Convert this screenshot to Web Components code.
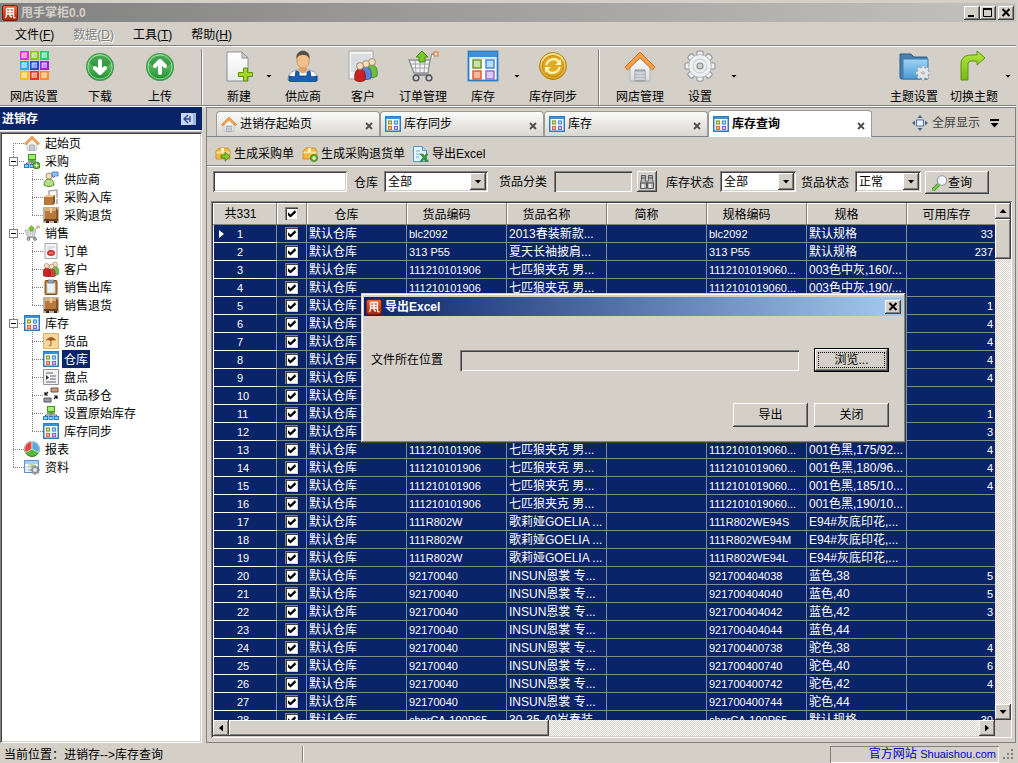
<!DOCTYPE html>
<html lang="zh-CN">
<head>
<meta charset="utf-8">
<title>甩手掌柜0.0</title>
<style>
html, body { height: 100%; margin: 0; }
body { background: #d4d0c8; color: #000; font: 12px/16px "Liberation Sans", "Noto Sans CJK SC", sans-serif; overflow: hidden; }
</style>
</head>
<body>
<app-window></app-window>
<script>
const BASE = `
*, *::before, *::after { box-sizing: border-box; }
:host { display: block; box-sizing: border-box; }
:host([hidden]) { display: none; }
button, input, select { font: inherit; color: inherit; margin: 0; padding: 0; border: 0; border-radius: 0; background: none; }
button { white-space: nowrap; }
.raised { background: #d4d0c8; box-shadow: inset -1px -1px #404040, inset 1px 1px #fff, inset -2px -2px #808080; }
.sunken { box-shadow: inset 1px 1px #808080, inset -1px -1px #fff, inset 2px 2px #404040, inset -2px -2px #d4d0c8; }
`;

function define(name, css, html, setup) {
  customElements.define(name, class extends HTMLElement {
    constructor() {
      super();
      this.attachShadow({ mode: 'open' });
    }
    connectedCallback() {
      if (this.shadowRoot.childNodes.length) return;
      const t = document.createElement('template');
      t.innerHTML = `<style>${BASE}${css}</style>` + (typeof html === 'function' ? html(this) : html);
      this.shadowRoot.append(t.content.cloneNode(true));
      if (setup) setup(this);
    }
  });
}

/* ---------- icons ---------- */
const grad = (id, a, b) => `<linearGradient id="${id}" x1="0" y1="0" x2="0" y2="1"><stop offset="0" stop-color="${a}"/><stop offset="1" stop-color="${b}"/></linearGradient>`;
const tiles = ['#e030d8', '#86c610', '#20cc70', '#30a8f0', '#2848d8', '#a020e0', '#f8b818', '#e83818', '#f89028'];
const person = (x, y, c, d) => `<path d="M${x - 5} ${y + 14}c-1-7 1-11 5-11s6 4 5 11c-3 2-7 2-10 0z" fill="${c}" stroke="${d}" stroke-width=".8"/><circle cx="${x}" cy="${y}" r="3.4" fill="#f6dfc0" stroke="#8f7a5c" stroke-width=".8"/>`;
const arrowBall = p => `<defs>${grad('a', '#8ad88a', '#1c8c2c')}</defs><circle cx="16" cy="17" r="13.4" fill="url(#a)" stroke="#4c9a54" stroke-width="1.2"/><path d="M5 13c3-9 18-12 23-1-4 6-14 9-23 1z" fill="#0e7420" opacity=".45"/><circle cx="16" cy="17" r="12" fill="none" stroke="#a8e8a4" stroke-width=".8"/><path d="${p}" fill="none" stroke="#fff" stroke-width="4" stroke-linejoin="round" stroke-linecap="round"/>`;
const pallet = `<path d="M0 0h16v16H0z" fill="#b9b3a6"/><path d="M2 1h11v11H2z" fill="#b87a3c"/><path d="M2 1h11v3H2z" fill="#dcb07a"/><path d="M7 1h2v5H7z" fill="#ecd2a0"/><path d="M13 1l2 2v9h-2z" fill="#8d5623"/><path d="M1 12h14v2H1z" fill="#6b4020"/><path d="M3 14h3v2H3zM11 14h3v2h-3z" fill="#3c2410"/>`;
const network = (extra = '') => `<path d="M8 6v4M2.500 12v-2h11v2" fill="none" stroke="#557" stroke-width="1"/><rect x="4.500" y="1.500" width="7" height="5" fill="#a5ec6d" stroke="#3f9a1e"/><path d="M4 8h8" stroke="#3f9a1e" stroke-width="1.500"/><g fill="#8fd2f8" stroke="#2a7fc4"><rect x=".5" y="11.500" width="4" height="3"/><rect x="6" y="11.500" width="4" height="3"/><rect x="11.500" y="11.500" width="4" height="3"/></g>${extra}`;
const plusDot = (x, y) => `<circle cx="${x}" cy="${y}" r="3.5" fill="#5cb52a" stroke="#2f7d12" stroke-width=".8"/><path d="M${x - 2} ${y}h4M${x} ${y - 2}v4" stroke="#fff" stroke-width="1.2"/>`;
const gearPath = (cx, cy, r, n, w) => {
  let s = '';
  for (let i = 0; i < n; i++) s += `<rect x="${cx - w / 2}" y="${cy - r}" width="${w}" height="${r}" rx="${w / 4}" transform="rotate(${i * 360 / n} ${cx} ${cy})"/>`;
  return s;
};
const gear = (cx, cy, r) => `<g fill="#eef0f1" stroke="#9a9fa4" stroke-width="${r / 12}">${gearPath(cx, cy, r, 8, r * .42)}</g><circle cx="${cx}" cy="${cy}" r="${r * .76}" fill="#eceeef" stroke="#a4a9ad" stroke-width="${r / 20}"/><circle cx="${cx}" cy="${cy}" r="${r * .46}" fill="none" stroke="#cdd1d4" stroke-width="${r / 12}"/><circle cx="${cx}" cy="${cy}" r="${r * .2}" fill="#d4d0c8" stroke="#858b90" stroke-width="${r / 14}"/>`;
const folderBox = `<path d="M1 5l3-3h9l2 3v8H1z" fill="#f3b93f" stroke="#c4861a" stroke-width=".8"/><path d="M1.500 5.500h13v2h-13z" fill="#fde5a2"/><path d="M6 2h3v4H6z" fill="#fff0c4"/>`;
const houseShape = `<path d="M6 15L16 6l10 9v16H6z" fill="url(#a)" stroke="#aeb2b6"/><path d="M1 17L16 2l15 15-2.500 3L16 8 3.500 20z" fill="#f5a04a" stroke="#cd6f22"/><path d="M11 20h10v11H11z" fill="#b4bbc2" stroke="#8d949b"/><path d="M11 23h10M11 26h10M11 29h10" stroke="#e9ecee"/>`;

const ICONS = {
  logo: [16, `<defs>${grad('a', '#f06a35', '#a92508')}</defs><rect x=".5" y=".5" width="15" height="15" rx="2" fill="url(#a)" stroke="#7c1c06"/><path d="M4.500 3.500h7v8c0 1 .3 1.500 2 1.200M4.500 3.500v6c0 2-.5 3-1.500 3.500M4.500 6.500h7M4.500 9h7M8 3.500v6.500c0 1.500.8 2 2 2" fill="none" stroke="#fff" stroke-width="1.300"/>`],
  apps: [32, tiles.map((c, i) => `<rect x="${2 + i % 3 * 10}" y="${1 + (i / 3 | 0) * 10}" width="9" height="9" fill="${c}"/><rect x="${4 + i % 3 * 10}" y="${3 + (i / 3 | 0) * 10}" width="5" height="5" fill="#fff" opacity=".5"/><path d="M${4 + i % 3 * 10} ${8 + (i / 3 | 0) * 10}v-5h5" fill="none" stroke="#fff" opacity=".6"/>`).join('')],
  down: [32, arrowBall('M16 11v11M11 18l5 5 5-5')],
  up: [32, arrowBall('M16 23v-11M11 16l5-5 5 5')],
  newdoc: [32, `<defs>${grad('a', '#fff', '#e9eaea')}</defs><path d="M4 2h15l6 6v23H4z" fill="url(#a)" stroke="#8c8f92"/><path d="M19 2v6h6z" fill="#cfd2d4" stroke="#8c8f92"/><path d="M20.500 18h4v4.500h5v4h-5v4.500h-4v-4.500h-5v-4h5z" fill="#a5d625" stroke="#5d9410"/>`],
  person: [32, `<path d="M1 30c0-6 3-9 10-10h10c7 1 10 4 10 10-7 3-23 3-30 0z" fill="#fafafa" stroke="#99a"/><path d="M2 26l6 1 1-6 3 1v4h8v-4l3-1 1 6 6-1v5c-8 2-20 2-28 0z" fill="#1c5fb0" stroke="#0f3f84" stroke-width=".8"/><path d="M12 18h8v3c-2 3-6 3-8 0z" fill="#e0a468"/><path d="M10 8c0-9 12-9 12 0v4c0 8-12 8-12 0z" fill="#f3c08a" stroke="#b57a45" stroke-width=".6"/><path d="M9.500 9C8-2 24-2 22.500 9 21 6 20 5 16 5s-5 1-6.500 4z" fill="#56504a"/>`],
  customers: [32, `<path d="M2 1h24v28H2z" fill="#f2f2f1" stroke="#a5a5a3"/><path d="M4 4h20v18H4z" fill="#d9dde0"/>${person(25, 12, '#6cc040', '#3c8420')}${person(19, 14, '#5a82d8', '#2c4c9c')}${person(13, 16, '#cc2222', '#7c0c0c')}`],
  cart: [32, `<path d="M2 10h21l-2 13H7zM23 10l2-6h4" fill="#f2f3f4" stroke="#8b8f92" stroke-width="1.300"/><path d="M4 14h18M5 18h16M8 10l1 13M13 10v13M18 10l-1 13" stroke="#a2a6a9"/><path d="M7 25h17" stroke="#777" stroke-width="1.500"/><g fill="#d4d8da" stroke="#55595c" stroke-width="1.600"><circle cx="9" cy="28" r="2.800"/><circle cx="22" cy="28" r="2.800"/></g><path d="M15 1l6 6h-3v5h-6V7H9z" fill="#7cc82b" stroke="#458c10"/><rect x="27" y="2" width="4" height="4" fill="#f3dcc4" stroke="#c77a3a"/>`],
  window: [32, `<rect x="1.500" y="1.500" width="29" height="29" fill="#fbfdff" stroke="#2e7cc0" stroke-width="1.800"/><path d="M2 2h28v5H2z" fill="#3d91d6"/><path d="M3 8h26" stroke="#a9d2f2"/><g stroke-width="1.600"><rect x="6" y="10" width="8" height="8" fill="#c5e2a0" stroke="#7a9c34"/><rect x="19" y="10" width="8" height="8" fill="#b8dcfa" stroke="#4a92e0"/><rect x="6" y="21" width="8" height="8" fill="#fbb59c" stroke="#e0663c"/><rect x="19" y="21" width="8" height="8" fill="#dccaf8" stroke="#9a74d8"/></g>`],
  winsmall: [16, `<rect x=".75" y=".75" width="14.500" height="14.500" fill="#fbfdff" stroke="#2e7cc0" stroke-width="1.500"/><path d="M1 1h14v2H1z" fill="#3d91d6"/><g stroke-width="1.200"><rect x="3.500" y="5" width="3" height="3" fill="#dcecc4" stroke="#8a9c24"/><rect x="9.500" y="5" width="3" height="3" fill="#c8e4fc" stroke="#4a92e0"/><rect x="3.500" y="10.500" width="3" height="3" fill="#fcc8a8" stroke="#e0663c"/><rect x="9.500" y="10.500" width="3" height="3" fill="#e4d8fa" stroke="#8a64d0"/></g>`],
  coin: [32, `<defs>${grad('a', '#fbe894', '#d99a14')}</defs><circle cx="16" cy="16" r="13.500" fill="url(#a)" stroke="#b47c10"/><circle cx="16" cy="16" r="10.500" fill="#e0aa24" stroke="#c08a14"/><path d="M9.500 15c1-6 9-8 12.500-3M22.500 17c-1 6-9 8-12.500 3" fill="none" stroke="#fff3b4" stroke-width="2.200"/><path d="M24 9v6h-6zM8 23v-6h6z" fill="#fff3b4"/>`],
  house: [32, `<defs>${grad('a', '#fff', '#d9dcdf')}</defs>${houseShape}`],
  gear: [32, gear(16, 16, 15)],
  folder: [32, `<defs>${grad('a', '#9fd4f4', '#4d9bd4')}</defs><path d="M2 4h11l3 3h13v22H4c-2 0-2-1-2-3z" fill="#4a7fab" stroke="#2f5f88"/><path d="M5 9h25v20H5z" fill="url(#a)" stroke="#3d7db0"/>${gear(25, 23, 7)}`],
  turn: [32, `<defs>${grad('a', '#b4e640', '#7ab818')}</defs><path d="M3 30V14C3 8 7 5 13 5h6V1l8 7-8 7v-4h-5c-3 0-4 1-4 4v15z" fill="url(#a)" stroke="#5a9210"/>`],
  purchase: [16, network(plusDot(12.5, 12.5))],
  stock: [16, network()],
  supplier: [16, `<path d="M1 14c0-4 2-6 5-6s5 2 5 6c-3 2-7 2-10 0z" fill="#b5dc8c" stroke="#4e8a2a"/><circle cx="6" cy="5" r="3" fill="#f6dfc0" stroke="#9a7d4c" stroke-width=".8"/><path d="M9 1h6v4h-3l-2 2V5H9z" fill="#8ec2f4" stroke="#3b74b8" stroke-width=".8"/>`],
  boxin: [16, `<path d="M6 7V2l8-1v8" fill="none" stroke="#a8abad" stroke-width="1.500"/><path d="M1 8l3-2h8v8l-2 2H1z" fill="#b97838"/><path d="M1 8l3-2h8l-2 2z" fill="#eec793"/><path d="M10 8l2-2v8l-2 2z" fill="#8c5424"/><path d="M14 10v5" stroke="#999" stroke-width="1.500"/>`],
  pallet: [16, pallet],
  order: [16, `<path d="M2 .5h12v15H2z" fill="#f4f6f8" stroke="#a3a8ae"/><path d="M4 4h8M4 6h5" stroke="#c5c9ce"/><ellipse cx="8" cy="10" rx="4" ry="3" fill="#d03030"/><path d="M6 10h4" stroke="#fbb"/>`],
  people: [16, `<g transform="translate(-4 -5) scale(.7)">${person(23, 12, '#6cc040', '#3c8420')}${person(18, 15, '#c44', '#822')}${person(11, 14, '#cc2222', '#7c0c0c')}</g>`],
  clipboard: [16, `<rect x="2" y="1.500" width="12" height="14" rx="1" fill="#c98432" stroke="#7d4a13"/><path d="M4 4h8v10H4z" fill="#e8f4fd" stroke="#a9bfd2" stroke-width=".6"/><path d="M5 1h6v3H5z" fill="#9aa4ae" stroke="#5d6770" stroke-width=".6"/>`],
  umbrella: [16, `<path d="M.5 .5h15v15H.5z" fill="#f3d79c" stroke="#dcb268"/><path d="M3 8c1-5 9-5 10 0l-2-1-3 1-3-1z" fill="#a05c1c"/><path d="M8 4v8c0 1-2 1-2 0" fill="none" stroke="#a05c1c"/>`],
  list: [16, `<path d="M.5 .5h15v15H.5z" fill="#f2f2f3" stroke="#90949a"/><path d="M3 4h7M7 7h6M7 10h6M3 13h10" stroke="#5f656c"/><path d="M3 6v5l3-2.500z" fill="#333"/>`],
  move: [16, `<path d="M8 1h7v4H8z" fill="#c99a7c" stroke="#7a4c34"/><path d="M1 11h7v4H1z" fill="#9a9aa2" stroke="#55555c"/><path d="M5 5L2 8M2 5v3h3M11 12l3-3M11 9h3v3" fill="none" stroke="#111" stroke-width="1.200"/>`],
  pie: [16, `<circle cx="8" cy="8" r="7.500" fill="#58b83a" stroke="#35782a"/><path d="M8 8V.5A7.500 7.500 0 0 0 1.500 11.500z" fill="#e04444" stroke="#fff" stroke-width=".6"/><path d="M8 8V.5A7.500 7.500 0 0 1 14.500 11.500z" fill="#58a8e4" stroke="#fff" stroke-width=".6"/>`],
  data: [16, `<path d="M.5 1.500h14v12H.5z" fill="#fff" stroke="#5a92c8"/><path d="M1 2h13v3H1z" fill="#a6d0f2"/><path d="M1 8h13M1 11h13M5 5v8M10 5v8" stroke="#b4cbe0"/><path d="M6 5h4v3H6z" fill="#b4e08a"/><g fill="#9aa0a6" stroke="#6d7378" stroke-width=".5">${gearPath(11, 11, 4.500, 8, 1.800)}</g><circle cx="11" cy="11" r="2" fill="#e5e7e9"/>`],
  boxgo: [16, folderBox + `<path d="M6 9h4V6l5 4.500-5 4.500v-3H6z" fill="#7cc82b" stroke="#3f8410" stroke-width=".8"/>`],
  boxadd: [16, folderBox + plusDot(12, 12)],
  excel: [16, `<path d="M.5 .5h9l4 4v11H.5z" fill="#e4f3fc" stroke="#4a9ac8"/><path d="M9.500 .5v4h4" fill="#b5dcf2" stroke="#4a9ac8"/><path d="M3 5h4M3 8h4M3 11h3" stroke="#6cb2d8"/><path d="M7 8h3l1.500 2L13 8h2l-2.500 3.500 3 4h-3l-1.500-2-2 2H7l3-4z" fill="#2f9c3a" stroke="#176a24" stroke-width=".5"/>`],
  binoculars: [16, `<g fill="#b4b6b8" stroke="#55585b"><path d="M2.500 1.500h4v4l1 3v6h-6v-6l1-3zM9.500 1.500h4v4l1 3v6h-6v-6l1-3z"/></g><path d="M3 4h3M10 4h3M2 9h5M9 9h5" stroke="#55585b"/><path d="M3 10h2v4H3zM10 10h2v4h-2z" fill="#e8eaeb"/>`],
  search: [16, `<path d="M6 10l-5 5" stroke="#3f8a24" stroke-width="3.500" stroke-linecap="round"/><path d="M6 10l-5 5" stroke="#7cd050" stroke-width="1.800" stroke-linecap="round"/><circle cx="10" cy="5.500" r="4.800" fill="#eef4f8" stroke="#a0a8ae" stroke-width="1.300"/><path d="M7 5c0-2 2-3 4-2" stroke="#fff" fill="none"/>`],
  fullscreen: [16, `<rect x="4.500" y="5" width="7" height="6" fill="#eef3fb" stroke="#5572a8"/><path d="M8 0l2.500 3h-5zM8 16l2.500-3h-5zM0 8l3-2.500v5zM16 8l-3-2.500v5z" fill="#4b6288"/>`],
  dock: [16, `<path d="M0 2h15v12H0z" fill="#c9d8f4"/><path d="M10 2h5v12h-5z" fill="#9db6e8"/><path d="M11 3v10" stroke="#fff"/><path d="M7 4L3 8l4 4M3 8h6M9 5v6" fill="none" stroke="#2a4694" stroke-width="1.300"/>`],
  min: [14, `<path d="M3 9h6v2H3z" fill="#000"/>`],
  max: [14, `<path d="M2.500 2.500h8v8h-8z" fill="none" stroke="#000"/><path d="M2 2h9v2H2z" fill="#000"/>`],
  close: [14, `<path d="M3.500 3l7 7M10.500 3l-7 7" stroke="#000" stroke-width="2"/>`],
  tabclose: [8, `<path d="M1 1l6 6M7 1L1 7" stroke="#4c4c4c" stroke-width="1.800"/>`]
};
define('ui-icon', `:host { display: inline-block; flex: none; width: 16px; height: 16px; } :host([large]) { width: 32px; height: 32px; } :host([name=tabclose]) { width: 8px; height: 8px; } svg { display: block; width: 100%; height: 100%; }`,
  el => { const [s, b] = ICONS[el.getAttribute('name')]; return `<svg viewBox="0 0 ${s} ${s}" aria-hidden="true">${b}</svg>`; });

/* small triangle used by menus, selects and scroll bars */
define('ui-arrow', `:host { display: inline-block; flex: none; width: 7px; height: 4px; background: #000; clip-path: polygon(0 0, 100% 0, 50% 100%); }
:host([dir=up]) { clip-path: polygon(50% 0, 100% 100%, 0 100%); }
:host([dir=left]) { width: 4px; height: 7px; clip-path: polygon(100% 0, 100% 100%, 0 50%); }
:host([dir=right]) { width: 4px; height: 7px; clip-path: polygon(0 0, 100% 50%, 0 100%); }
:host([small]) { width: 6px; height: 3px; }`, '');

/* ---------- title, menu and tool bars ---------- */
define('title-bar', `
:host { display: flex; align-items: center; height: 19px; padding: 0 2px; background: linear-gradient(90deg, #808080, #c4c2be); color: #d4d0c8; font-weight: bold; }
h1 { flex: 1; margin: 0 0 0 3px; padding-top: 2px; font: inherit; line-height: 17px; }
.box { display: flex; }
button { width: 16px; height: 14px; display: grid; place-items: center; overflow: hidden; }
button:last-child { margin-left: 2px; }
.box ui-icon { width: 14px; height: 14px; }`,
`<ui-icon name="logo"></ui-icon><h1><slot></slot></h1>
<div class="box"><button class="raised" aria-label="最小化"><ui-icon name="min"></ui-icon></button><button class="raised" aria-label="最大化"><ui-icon name="max"></ui-icon></button><button class="raised" aria-label="关闭"><ui-icon name="close"></ui-icon></button></div>`);

define('menu-bar', `
:host { display: flex; gap: 19px; align-items: center; height: 25px; padding: 2px 15px 0; border-bottom: 1px solid #fff; box-shadow: inset 0 -1px #808080; }
button { height: 20px; } button:disabled { color: #808080; text-shadow: 1px 1px #fff; }`,
`<button>文件(<u>F</u>)</button><button disabled>数据(<u>D</u>)</button><button>工具(<u>T</u>)</button><button>帮助(<u>H</u>)</button>`);

define('tool-button', `
:host { display: flex; height: 58px; }
.main { display: flex; flex-direction: column; align-items: center; justify-content: space-between; width: 60px; padding-top: 3px; }
:host([narrow]) .main { width: 52px; }
.drop { width: 8px; }
.drop ui-arrow { display: block; margin: auto; }`,
el => `<button class="main"><ui-icon large name="${el.getAttribute('icon')}"></ui-icon><span><slot></slot></span></button>${el.hasAttribute('menu') ? '<button class="drop" aria-label="更多"><ui-arrow small></ui-arrow></button>' : ''}`);

define('tool-bar', `
:host { display: flex; height: 60px; padding: 0 4px; border-bottom: 1px solid #fff; box-shadow: inset 0 -1px #808080; }
.sep { width: 2px; height: 56px; margin: 2px 10px 0 11px; border-left: 1px solid #808080; border-right: 1px solid #fff; }
.space { flex: 1; }
.first { margin-right: 6px; }
.sync { margin: 0 4px 0 2px; }`,
`<tool-button class="first" icon="apps">网店设置</tool-button><tool-button icon="down">下载</tool-button><tool-button icon="up">上传</tool-button>
<span class="sep"></span>
<tool-button icon="newdoc" narrow menu>新建</tool-button><tool-button icon="person">供应商</tool-button><tool-button icon="customers">客户</tool-button><tool-button icon="cart">订单管理</tool-button><tool-button icon="window" menu>库存</tool-button><tool-button class="sync" icon="coin">库存同步</tool-button>
<span class="sep"></span>
<tool-button icon="house">网店管理</tool-button><tool-button icon="gear" menu>设置</tool-button>
<span class="space"></span>
<tool-button icon="folder">主题设置</tool-button><tool-button icon="turn" menu>切换主题</tool-button>`);

/* ---------- navigation tree ---------- */
const TREE = [
  ['house', '起始页'],
  ['purchase', '采购', [['supplier', '供应商'], ['boxin', '采购入库'], ['pallet', '采购退货']]],
  ['cart', '销售', [['order', '订单'], ['people', '客户'], ['clipboard', '销售出库'], ['pallet', '销售退货']]],
  ['winsmall', '库存', [['umbrella', '货品'], ['winsmall', '仓库', null, true], ['list', '盘点'], ['move', '货品移仓'], ['stock', '设置原始库存'], ['winsmall', '库存同步']]],
  ['pie', '报表'],
  ['data', '资料']
];
const dots = d => `<path d="${d}" fill="none" stroke="#808080" stroke-dasharray="1 1"/>`;
function treeRow([icon, text, kids, sel], level, first, last) {
  const w = level ? 41 : 22;
  let g = dots(level ? 'M11.500 0V18' : `M11.500 ${first ? 9 : 0}V${last ? 9 : 18}`);
  if (level) g += dots(`M30.500 0V${last ? 9 : 18}`) + dots('M30 9.500H41');
  else g += dots('M11 9.500H22');
  if (kids) g += '<rect x="7.500" y="5.500" width="8" height="8" fill="#fff" stroke="#808080"/><path d="M9 9.500h5" stroke="#000"/>';
  return `<li role="treeitem"><div class="row"><svg width="${w}" height="18" aria-hidden="true">${g}</svg><ui-icon name="${icon}"></ui-icon><span class="${sel ? 'sel' : ''}">${text}</span></div>${kids ? `<ul role="group">${kids.map((k, i) => treeRow(k, 1, false, i === kids.length - 1)).join('')}</ul>` : ''}</li>`;
}
define('nav-tree', `
:host { display: flex; flex-direction: column; min-height: 0; }
header { display: flex; align-items: center; justify-content: space-between; height: 24px; padding: 0 5px 0 2px; background: #0a246a; color: #fff; font-weight: bold; border-bottom: 1px solid #fff; }
header button { height: 16px; }
.tree { flex: 1; overflow: hidden; margin-top: 1px; padding: 2px; background: #fff; }
ul { list-style: none; margin: 0; padding: 0; }
.row { display: flex; align-items: center; height: 18px; white-space: nowrap; }
svg { flex: none; }
span { margin-left: 3px; padding: 2px 2px 0; line-height: 16px; }
.sel { background: #0a246a; color: #fff; }`,
`<header>进销存<button aria-label="隐藏"><ui-icon name="dock"></ui-icon></button></header><div class="tree sunken"><ul role="tree">${TREE.map((r, i) => treeRow(r, 0, i === 0, i === TREE.length - 1)).join('')}</ul></div>`);

/* ---------- tabs ---------- */
define('page-tab', `
:host { display: flex; align-items: center; flex: 0 1 164px; height: 25px; padding: 0 6px 0 4px; border: 1px solid #9a9a96; border-width: 1px 1px 0; border-radius: 4px 4px 0 0; background: linear-gradient(#fafafa, #d8d6d0); }
:host([selected]) { background: #fff; font-weight: bold; }
.name { flex: 1; display: flex; align-items: center; gap: 3px; text-align: left; }
.x { width: 8px; height: 16px; padding-top: 2px; }`,
el => `<button class="name" role="tab"><ui-icon name="${el.getAttribute('icon')}"></ui-icon><slot></slot></button><button class="x" aria-label="关闭标签"><ui-icon name="tabclose"></ui-icon></button>`);
define('tab-strip', `
:host { display: flex; align-items: flex-end; height: 29px; padding: 0 16px 0 9px; box-shadow: inset 0 -1px #808080; }
page-tab { margin-bottom: 1px; } page-tab[selected] { margin-bottom: 0; height: 27px; }
.space { flex: 1; }
.full { display: flex; align-items: center; gap: 4px; height: 28px; color: #404040; }
.more { margin-left: 10px; height: 28px; width: 9px; }
.more::before { content: ""; display: block; height: 2px; margin-bottom: 2px; background: #000; }
.more ui-arrow { display: block; width: 9px; height: 5px; }`,
`<page-tab icon="house">进销存起始页</page-tab><page-tab icon="winsmall">库存同步</page-tab><page-tab icon="winsmall">库存</page-tab><page-tab icon="winsmall" selected>库存查询</page-tab>
<span class="space"></span><button class="full"><ui-icon name="fullscreen"></ui-icon>全屏显示</button><button class="more" aria-label="标签列表"><ui-arrow></ui-arrow></button>`);

/* ---------- actions and filters ---------- */
define('action-bar', `
:host { display: flex; align-items: center; gap: 8px; height: 30px; padding: 4px 8px 0; border-bottom: 1px solid #fff; box-shadow: inset 0 -1px #808080; }
button { display: flex; align-items: center; gap: 3px; }`,
`<button><ui-icon name="boxgo"></ui-icon>生成采购单</button><button><ui-icon name="boxadd"></ui-icon>生成采购退货单</button><button><ui-icon name="excel"></ui-icon>导出Excel</button>`);

define('select-field', `
:host { display: flex; align-items: center; gap: 6px; }
label { white-space: nowrap; padding-top: 2px; }
.box { display: flex; width: var(--w, 76px); height: 21px; padding: 2px; background: #fff; }
select { flex: 1; min-width: 0; appearance: none; padding: 1px 0 0 2px; outline: 0; line-height: 16px; }
.arrow { display: grid; place-items: center; width: 16px; pointer-events: none; margin-left: -16px; }`,
el => `<label for="s">${el.getAttribute('label')}</label><div class="box sunken"><select id="s"><option>${el.getAttribute('value')}</option></select><span class="arrow raised"><ui-arrow></ui-arrow></span></div>`);

define('filter-bar', `
:host { display: flex; align-items: flex-start; height: 34px; padding: 4px 6px 0; }
input { height: 21px; padding: 2px 4px; outline: 0; }
.key { width: 134px; background: #fff; margin-right: 7px; }
.cat { width: 78px; margin: 0 5px 0 7px; box-shadow: inset 1px 1px #808080, inset 2px 2px #404040, inset -1px -1px #fff; }
label { line-height: 21px; padding-top: 1px; margin-left: 11px; white-space: nowrap; }
.find { display: grid; place-items: center; width: 20px; height: 21px; margin-right: 9px; }
.go { display: flex; align-items: center; justify-content: center; width: 64px; height: 23px; margin-left: 4px; padding-right: 10px; }
.gap { margin-right: 5px; }`,
`<input class="key sunken" aria-label="关键字"><select-field label="仓库" value="全部" style="--w:104px"></select-field>
<label for="cat">货品分类</label><input id="cat" class="cat" readonly><button class="find raised" aria-label="选择分类"><ui-icon name="binoculars"></ui-icon></button>
<select-field class="gap" label="库存状态" value="全部"></select-field><select-field label="货品状态" value="正常" style="--w:66px"></select-field>
<button class="go raised"><ui-icon name="search"></ui-icon>查询</button>`);

/* ---------- stock grid ---------- */
const COLS = ['仓库', '货品编码', '货品名称', '简称', '规格编码', '规格', '可用库存'];
const jacket = (spec, q) => ['111210101906', '七匹狼夹克 男...', '', '1112101019060...', spec, q];
const goelia = s => ['111R802W', '歌莉娅GOELIA ...', '', '111R802WE94' + s, 'E94#灰底印花,...', ''];
const insun = (sku, spec, q) => ['92170040', 'INSUN恩裳 专...', '', '9217004' + sku, spec, q];
const ROWS = [
  ['blc2092', '2013春装新款...', '', 'blc2092', '默认规格', '33'],
  ['313 P55', '夏天长袖披肩...', '', '313 P55', '默认规格', '237'],
  jacket('003色中灰,160/...', ''), jacket('003色中灰,190/...', ''),
  ...['1', '4', '4', '4', '4', '', '1', '3'].map(q => ['', '', '', '', '', q]),
  jacket('001色黑,175/92...', '4'), jacket('001色黑,180/96...', '4'), jacket('001色黑,185/10...', '4'), jacket('001色黑,190/10...', ''),
  goelia('S'), goelia('M'), goelia('L'),
  insun('04038', '蓝色,38', '5'), insun('04040', '蓝色,40', '5'), insun('04042', '蓝色,42', '3'), insun('04044', '蓝色,44', ''),
  insun('00738', '驼色,38', '4'), insun('00740', '驼色,40', '6'), insun('00742', '驼色,42', '4'), insun('00744', '驼色,44', ''),
  ['chprCA-100P65', '30-35-40岁春装', '', 'chprCA-100P65', '默认规格', '30']
];
define('check-box', `
:host { display: grid; place-items: center; }
input { appearance: none; display: grid; place-items: center; width: 13px; height: 13px; background: #fff; box-shadow: inset 1px 1px #808080, inset 2px 2px #404040, inset -1px -1px #d4d0c8; }
input:checked::before { content: ""; width: 9px; height: 8px; background: #000; clip-path: polygon(11% 35%, 39% 62%, 89% 5%, 100% 38%, 39% 100%, 11% 72%); }`,
el => `<input type="checkbox" checked aria-label="${el.getAttribute('label')}">`);

define('scroll-bar', `
:host { display: flex; background: repeating-conic-gradient(#fff 0 25%, #d4d0c8 0 50%) 0 0 / 2px 2px; height: 16px; }
:host([vertical]) { flex-direction: column; width: 16px; height: auto; }
button { display: grid; place-items: center; width: 16px; height: 16px; flex: none; }
.thumb { flex: 0 0 var(--thumb); }
.track { flex: 1; }`,
el => { const v = el.hasAttribute('vertical'); return `<button class="raised" aria-label="向前"><ui-arrow dir="${v ? 'up' : 'left'}"></ui-arrow></button><span class="thumb raised"></span><span class="track"></span><button class="raised" aria-label="向后"><ui-arrow dir="${v ? 'down' : 'right'}"></ui-arrow></button>`; });

define('stock-grid', `
:host { display: grid; grid-template: minmax(0, 1fr) 16px / minmax(0, 1fr) 16px; padding: 2px 1px 2px 2px; background: #d4d0c8; box-shadow: inset 1px 1px #808080, inset -1px -1px #fff, inset 2px 2px #404040; }
.view { overflow: hidden; background: #808080; }
table { table-layout: fixed; width: 794px; border-collapse: separate; border-spacing: 0; color: #fff; }
th, td { padding: 0; font-weight: normal; overflow: hidden; white-space: nowrap; text-align: left; }
thead th { height: 22px; padding-top: 2px; background: #d4d0c8; color: #000; text-align: center; line-height: 18px; border-bottom: 1px solid #808080; box-shadow: inset 1px 1px #fff; border-right: 1px solid #808080; }
thead th.col { padding-right: 20px; }
thead th.total { padding-right: 8px; padding-top: 0; }
tbody td, tbody th { height: 18px; padding-top: 2px; line-height: 15px; background: #0a246a; border-right: 1px solid #7f8c9a; border-bottom: 1px solid #7f8c9a; }
tbody td { padding-left: 2px; }
tbody th { border-bottom-color: #fff; box-shadow: inset 1px 0 #fff; }
tbody td.check, thead th.check { padding: 0; }
tbody .code, tbody .no { font-size: 11px; }
tbody td.qty { text-align: right; padding-right: 13px; font-size: 11px; }
.mark { display: inline-block; width: 24px; }
tr.now .mark::before { content: ""; display: inline-block; width: 5px; height: 8px; margin-left: 6px; background: #fff; clip-path: polygon(0 0, 100% 50%, 0 100%); }`,
`<div class="view"><table><colgroup><col style="width:64px"><col style="width:30px">${COLS.map(() => '<col style="width:100px">').join('')}</colgroup>
<thead><tr><th class="total">共331</th><th class="check"><check-box label="全选"></check-box></th>${COLS.map(c => `<th class="col">${c}</th>`).join('')}</tr></thead>
<tbody>${ROWS.map((r, i) => `<tr class="${i ? '' : 'now'}"><th class="no"><span class="mark"></span>${i + 1}</th><td class="check"><check-box label="选择第${i + 1}行"></check-box></td><td>默认仓库</td><td class="code">${r[0]}</td><td>${r[1]}</td><td>${r[2]}</td><td class="code">${r[3]}</td><td>${r[4]}</td><td class="qty">${r[5]}</td></tr>`).join('')}</tbody></table></div>
<scroll-bar vertical style="--thumb:40px"></scroll-bar><scroll-bar style="--thumb:320px"></scroll-bar>`);

/* ---------- export dialog ---------- */
define('export-dialog', `
:host { display: block; width: 545px; padding: 4px 3px 3px; background: #d4d0c8; box-shadow: inset -1px -1px #404040, inset 1px 1px #d4d0c8, inset -2px -2px #808080, inset 2px 2px #fff; }
header { display: flex; align-items: center; height: 19px; padding: 0 2px; background: linear-gradient(90deg, #0a246a, #a6caf0); color: #fff; font-weight: bold; }
h2 { flex: 1; margin: 0 0 0 3px; font: inherit; }
header button { display: grid; place-items: center; width: 16px; height: 14px; color: #000; }
header button ui-icon { width: 14px; height: 14px; }
.body { padding: 32px 14px 13px 7px; }
.file, .foot { display: flex; align-items: center; }
label { width: 89px; }
input { flex: 1; min-width: 0; height: 21px; padding: 2px 4px; margin-right: 15px; box-shadow: inset 1px 1px #808080, inset 2px 2px #404040, inset -1px -1px #fff; outline: 0; }
.foot { justify-content: flex-end; gap: 6px; margin-top: 31px; }
.push { width: 75px; height: 24px; }
.default { border: 1px solid #000; outline: 1px dotted #000; outline-offset: -5px; }`,
`<header><ui-icon name="logo"></ui-icon><h2>导出Excel</h2><button class="raised" aria-label="关闭窗口"><ui-icon name="close"></ui-icon></button></header>
<div class="body"><div class="file"><label for="path">文件所在位置</label><input id="path" readonly><button class="push raised default">浏览...</button></div>
<div class="foot"><button class="push raised">导出</button><button class="push raised">关闭</button></div></div>`);

/* ---------- status bar ---------- */
define('status-bar', `
:host { display: flex; align-items: center; height: 20px; padding: 2px 2px 0 4px; }
.where { flex: 0 0 298px; padding-top: 1px; }
.line { width: 2px; height: 16px; border-left: 1px solid #808080; border-right: 1px solid #fff; }
.space { flex: 1; }
.site { width: 169px; height: 17px; line-height: 17px; padding-right: 3px; text-align: right; box-shadow: inset 1px 1px #808080, inset -1px -1px #fff; }
a { color: #00c; text-decoration: none; }
.domain { font-size: 11px; }
svg { margin-left: 3px; }`,
`<span class="where">当前位置：进销存--&gt;库存查询</span><span class="line"></span><span class="space"></span><span class="site"><a href="#">官方网站 <span class="domain">Shuaishou.com</span></a></span>
<svg width="12" height="13" aria-hidden="true"><g fill="#808080"><path d="M9 1h2v2H9zM9 5h2v2H9zM9 9h2v2H9zM5 5h2v2H5zM5 9h2v2H5zM1 9h2v2H1z"/></g></svg>`);

define('app-window', `
:host { display: flex; flex-direction: column; height: 100vh; padding: 3px 2px 0 0; position: relative; }
title-bar, menu-bar, tool-bar, status-bar { flex: none; }
main { flex: 1; min-height: 0; display: flex; gap: 4px; }
nav-tree { flex: 0 0 202px; }
section { flex: 1; min-width: 0; display: flex; flex-direction: column; padding: 0 3px 4px 4px; border: 1px solid #808080; }
tab-strip, action-bar, filter-bar { margin: 0 -3px 0 -4px; flex: none; }
stock-grid { flex: 1; min-height: 0; }
export-dialog { position: absolute; left: 361px; top: 293px; }`,
`<title-bar>甩手掌柜0.0</title-bar><menu-bar></menu-bar><tool-bar></tool-bar>
<main><nav-tree></nav-tree><section><tab-strip></tab-strip><action-bar></action-bar><filter-bar></filter-bar><stock-grid></stock-grid></section></main>
<status-bar></status-bar><export-dialog role="dialog" aria-label="导出Excel"></export-dialog>`);
</script>
</body>
</html>
